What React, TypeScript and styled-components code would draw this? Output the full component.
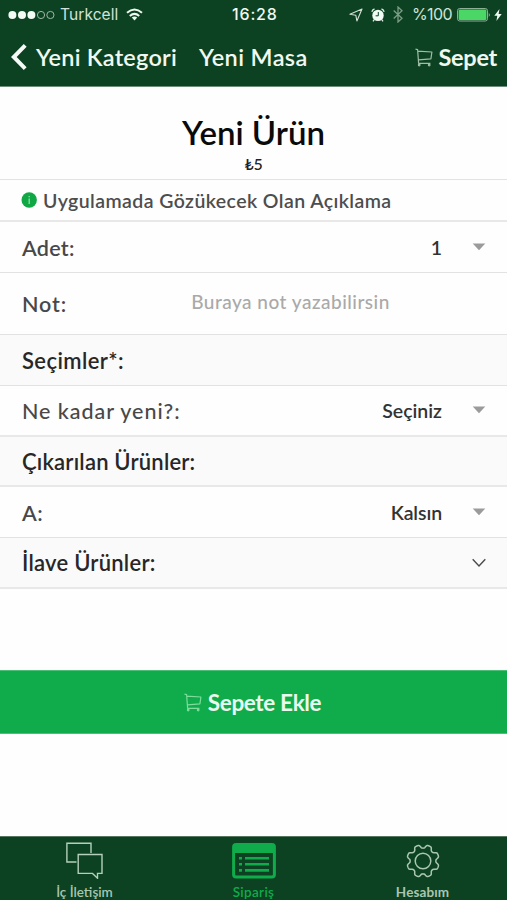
import React from 'react';
import styled, { createGlobalStyle } from 'styled-components';

const DARK = '#0c4221';
const GREEN = '#10ab4b';
const RULE = '#e2e2e2';

const GlobalStyle = createGlobalStyle`
  * { box-sizing: border-box; }
  body { margin: 0; background: #fefefe; font-family: Lato, sans-serif; }
`;

const Screen = styled.div`
  width: 507px;
  height: 900px;
  display: flex;
  flex-direction: column;
  overflow: hidden;
  background: #fefefe;
`;

const Text = styled.span<{ $size: number; $weight?: number; $track?: number }>`
  font-size: ${p => p.$size}px;
  font-weight: ${p => p.$weight ?? 500};
  letter-spacing: ${p => p.$track ?? 0}px;
  line-height: 1.2;
  white-space: nowrap;
`;

const Header = styled.header`
  flex: none;
  height: 87px;
  background: ${DARK};
  border-bottom: 1px solid #6d8c79;
  color: #f1f8f2;
`;

const StatusBar = styled.div`
  display: grid;
  grid-template-columns: 1fr 46px 1fr;
  align-items: center;
  height: 29px;
  padding: 0 5px 0 8px;
  font-family: Inter, sans-serif;
`;

const StatusGroup = styled.div<{ $end?: boolean }>`
  display: flex;
  align-items: center;
  justify-content: ${p => (p.$end ? 'flex-end' : 'flex-start')};
`;

const Signal = styled.svg`
  margin-right: 5px;
`;

const Wifi = styled.svg`
  margin-left: 8px;
`;

const StatusIcon = styled.svg<{ $gap: number }>`
  flex: none;
  margin-left: ${p => p.$gap}px;
`;

const Percent = styled(Text)`
  margin-left: 9px;
  color: #d3e2d7;
`;

const Carrier = styled(Text)`
  padding-top: 1px;
  color: #d3e2d7;
`;

const NavBar = styled.nav`
  display: flex;
  align-items: center;
  height: 56px;
  padding: 0 10px 0 11px;
`;

const BackButton = styled.div`
  display: flex;
  align-items: center;
  gap: 9px;
  width: 188px;
`;

const CartLink = styled.div`
  display: flex;
  align-items: center;
  gap: 6px;
  margin-left: auto;
`;

const Product = styled.section`
  flex: none;
  display: flex;
  flex-direction: column;
  align-items: center;
  height: 93px;
  padding-top: 25px;
  border-bottom: 1px solid ${RULE};
`;

const ProductTitle = styled(Text)`
  line-height: 40px;
  color: #0a0a0a;
`;

const Price = styled(Text)`
  line-height: 24px;
  color: #222;
`;

const Row = styled.div<{ $height: number; $shaded?: boolean; $rule?: number }>`
  flex: none;
  display: flex;
  align-items: center;
  height: ${p => p.$height}px;
  padding: 0 21px;
  background: ${p => (p.$shaded ? '#fafafa' : '#fefefe')};
  border-bottom: ${p => p.$rule ?? 1}px solid ${p => (p.$rule ? '#e8e8e8' : RULE)};
`;

const Description = styled(Text)`
  margin-left: 6px;
  padding-top: 1px;
  color: #4d4d4d;
`;

const Label = styled(Text)`
  padding: 3px 0 0 1px;
  color: #484848;
`;

const SectionTitle = styled(Text)`
  flex: 1;
  padding: 2px 0 0 1px;
  color: #272727;
`;

const Value = styled(Text)`
  margin-left: auto;
  margin-right: 30px;
  padding-top: 1px;
  color: #333;
`;

const Placeholder = styled(Text)`
  margin-left: 124px;
  padding-bottom: 3px;
  color: #a9a9a9;
`;

const Caret = styled.svg`
  flex: none;
  margin-bottom: 1px;
`;

const AddButton = styled.div`
  flex: none;
  display: flex;
  align-items: center;
  justify-content: center;
  gap: 6px;
  height: 64px;
  margin-top: 81px;
  padding-right: 2px;
  background: ${GREEN};
  border: solid #4cbf76;
  border-width: 1px 0;
  color: #e9faee;
`;

const TabBar = styled.footer`
  flex: none;
  display: grid;
  grid-template-columns: repeat(3, 1fr);
  height: 64px;
  margin-top: auto;
  border-top: 1px solid #55775f;
  background: ${DARK};
`;

const Tab = styled.div<{ $active?: boolean }>`
  display: flex;
  flex-direction: column;
  align-items: center;
  color: ${p => (p.$active ? GREEN : '#a9c6b1')};
`;

const TabIcon = styled.div`
  display: flex;
  align-items: center;
  height: 47px;
`;

const CartIcon = ({ color }: { color: string }) => (
  <svg width="18" height="19" viewBox="0 0 18 19" fill="none" stroke={color} strokeWidth="1.2" strokeLinejoin="round">
    <path d="M.5 1.2 2.6 1.6 3.6 15.3H15.4M2.8 3.2 16.9 4 15.9 10.8 3.6 11.8" />
    <circle cx="4.2" cy="17.1" r=".8" />
    <circle cx="14.2" cy="17.1" r=".8" />
  </svg>
);

const DropCaret = () => (
  <Caret width="14" height="8" viewBox="0 0 14 8">
    <path d="M.7.5H13.3L7 7.3Z" fill="#9b9b9b" />
  </Caret>
);

const gearPath = (() => {
  const points: string[] = [];
  for (let i = 0; i < 144; i++) {
    const angle = (i / 144) * Math.PI * 2;
    const wave = Math.cos(angle * 8 + Math.PI);
    const radius = 14.5 + 1.8 * Math.tanh(wave * 1.8 + 0.3);
    points.push(`${(17 + radius * Math.cos(angle)).toFixed(2)} ${(17 + radius * Math.sin(angle)).toFixed(2)}`);
  }
  return `M${points.join('L')}Z`;
})();

export default function App() {
  return (
    <Screen>
      <GlobalStyle />
      <Header>
        <StatusBar>
          <StatusGroup>
            <Signal width="47" height="10" viewBox="0 0 47 10">
              <g fill="#f4faf5">
                <circle cx="4.4" cy="5" r="4" />
                <circle cx="14" cy="5" r="4" />
                <circle cx="23.4" cy="5" r="4" />
              </g>
              <g fill="none" stroke="#9db8a5" strokeWidth="1">
                <circle cx="33" cy="5" r="3.6" />
                <circle cx="42.4" cy="5" r="3.6" />
              </g>
            </Signal>
            <Carrier $size={15.5} $weight={400} $track={0.1}>Turkcell</Carrier>
            <Wifi width="17" height="13" viewBox="0 0 17 13" fill="none" stroke="#eef7f0" strokeWidth="2">
              <path d="M1 4.8Q8.5-1.8 16 4.8M3.8 8Q8.5 3.8 13.2 8" />
              <path d="M5.8 9.6Q8.5 7.4 11.2 9.6L8.5 12.6Z" fill="#eef7f0" stroke="none" />
            </Wifi>
          </StatusGroup>
          <Text $size={16} $weight={500} $track={0.85}>16:28</Text>
          <StatusGroup $end>
            <StatusIcon $gap={0} width="14" height="14" viewBox="0 0 14 14" fill="none" stroke="#cfe0d4" strokeWidth="1.1" strokeLinejoin="round">
              <path d="M13 1 .9 6.3 6.8 7.2 7.9 13Z" />
            </StatusIcon>
            <StatusIcon $gap={8} width="14" height="14" viewBox="0 0 14 14">
              <circle cx="7" cy="7.4" r="5.7" fill="#f2faf4" />
              <path d="M.9 3.8Q1.2 1.5 3.5 1M13.1 3.8Q12.8 1.5 10.5 1M3.2 11.6 2 13.3M10.8 11.6 12 13.3" stroke="#dcebe0" strokeWidth="1.3" fill="none" />
              <path d="M7.3 4V7.8H4.6" stroke={DARK} strokeWidth="1" fill="none" />
            </StatusIcon>
            <StatusIcon $gap={8} width="10" height="17" viewBox="0 0 10 17" fill="none" stroke="#7b9d86" strokeWidth="1.3">
              <path d="M.7 4.6 9 12.3 5 16V1L9 4.7.7 12.4" />
            </StatusIcon>
            <Percent $size={16} $weight={400} $track={-0.6}>%100</Percent>
            <StatusIcon $gap={5} width="34" height="14" viewBox="0 0 34 14">
              <rect x=".5" y=".5" width="30" height="12.5" rx="2.2" fill="none" stroke="#8daf96" />
              <rect x="1.6" y="1.6" width="27.8" height="10.3" rx="1.2" fill="#4bd765" />
              <path d="M31.8 4.5Q33.6 6.7 31.8 9Z" fill="#b5cdbb" />
            </StatusIcon>
            <StatusIcon $gap={3} width="8" height="12" viewBox="0 0 8 12">
              <path d="M5.5 0 .3 6.7H3.3L2.4 12 7.7 5.1H4.6Z" fill="#eef7f0" />
            </StatusIcon>
          </StatusGroup>
        </StatusBar>
        <NavBar>
          <BackButton>
            <svg width="16" height="28" viewBox="0 0 16 28" fill="none" stroke="#f6fbf7" strokeWidth="4">
              <path d="M14.2 2.4 2.8 14 14.2 25.6" />
            </svg>
            <Text $size={23.5} $weight={600} $track={0.22}>Yeni Kategori</Text>
          </BackButton>
          <Text $size={23.5} $weight={600} $track={0.38}>Yeni Masa</Text>
          <CartLink>
            <CartIcon color="#9fbea8" />
            <Text $size={23.5} $weight={700} $track={-0.3}>Sepet</Text>
          </CartLink>
        </NavBar>
      </Header>

      <Product>
        <ProductTitle $size={33} $weight={600}>Yeni Ürün</ProductTitle>
        <Price $size={16} $weight={500} $track={-0.3}>₺5</Price>
      </Product>

      <Row $height={42} $rule={2}>
        <svg width="16" height="16" viewBox="0 0 16 16">
          <circle cx="8.2" cy="8" r="7.7" fill="#0fa844" />
          <path d="M8.2 6.4V12M8.2 4V5.2" stroke="#8ee0a5" strokeWidth="1.3" />
        </svg>
        <Description $size={19.5} $weight={600} $track={0.42}>Uygulamada Gözükecek Olan Açıklama</Description>
      </Row>
      <Row $height={51}>
        <Label $size={21.5} $weight={600} $track={0.3}>Adet:</Label>
        <Value $size={19.5} $weight={600}>1</Value>
        <DropCaret />
      </Row>
      <Row $height={62}>
        <Label $size={21.5} $weight={600} $track={0.9}>Not:</Label>
        <Placeholder $size={19} $weight={500} $track={0.49}>Buraya not yazabilirsin</Placeholder>
      </Row>
      <Row $height={51} $shaded>
        <SectionTitle $size={22} $weight={600} $track={0.4}>Seçimler*:</SectionTitle>
      </Row>
      <Row $height={51} $rule={2}>
        <Label $size={21.5} $track={0.94}>Ne kadar yeni?:</Label>
        <Value $size={19.5} $weight={600}>Seçiniz</Value>
        <DropCaret />
      </Row>
      <Row $height={50} $shaded $rule={2}>
        <SectionTitle $size={22} $weight={600} $track={0.2}>Çıkarılan Ürünler:</SectionTitle>
      </Row>
      <Row $height={51}>
        <Label $size={21.5} $weight={600} $track={0.4}>A:</Label>
        <Value $size={19.5} $weight={600} $track={-0.1}>Kalsın</Value>
        <DropCaret />
      </Row>
      <Row $height={51} $shaded $rule={2}>
        <SectionTitle $size={22} $weight={600} $track={0.25}>İlave Ürünler:</SectionTitle>
        <svg width="14" height="10" viewBox="0 0 14 10" fill="none" stroke="#4a4a4a" strokeWidth="1.4">
          <path d="M.7 1.2 7 8 13.3 1.2" />
        </svg>
      </Row>

      <AddButton>
        <CartIcon color="#7ddd9d" />
        <Text $size={22.5} $weight={700} $track={-0.35}>Sepete Ekle</Text>
      </AddButton>

      <TabBar>
        <Tab>
          <TabIcon>
            <svg width="37" height="37" viewBox="0 0 37 37" fill="none" stroke="#b4cfbb" strokeWidth="1.4">
              <path d="M10.5 20H.9V1.3H25V11" />
              <path d="M12.2 12.5H36V31.4H31.5V36.2L26.5 31.4H12.2Z" />
            </svg>
          </TabIcon>
          <Text $size={13.5} $weight={600} $track={0}>İç İletişim</Text>
        </Tab>
        <Tab $active>
          <TabIcon>
            <svg width="44" height="36" viewBox="0 0 44 36">
              <rect x="1.6" y="1.6" width="40.8" height="32.4" rx="2.5" fill="none" stroke={GREEN} strokeWidth="3" />
              <path d="M2 2H42V10H2Z" fill={GREEN} />
              <path d="M7 15.2H10M7 21.2H10M7 27.4H10M13 15.2H37M13 21.2H37M13 27.4H37" stroke={GREEN} strokeWidth="2.6" />
            </svg>
          </TabIcon>
          <Text $size={13.5} $weight={600} $track={0.35}>Sipariş</Text>
        </Tab>
        <Tab>
          <TabIcon>
            <svg width="34" height="34" viewBox="0 0 34 34" fill="none" stroke="#a9c6b1" strokeWidth="1.5">
              <path d={gearPath} />
              <circle cx="17" cy="17" r="7.8" />
            </svg>
          </TabIcon>
          <Text $size={13.5} $weight={700} $track={0.1}>Hesabım</Text>
        </Tab>
      </TabBar>
    </Screen>
  );
}
